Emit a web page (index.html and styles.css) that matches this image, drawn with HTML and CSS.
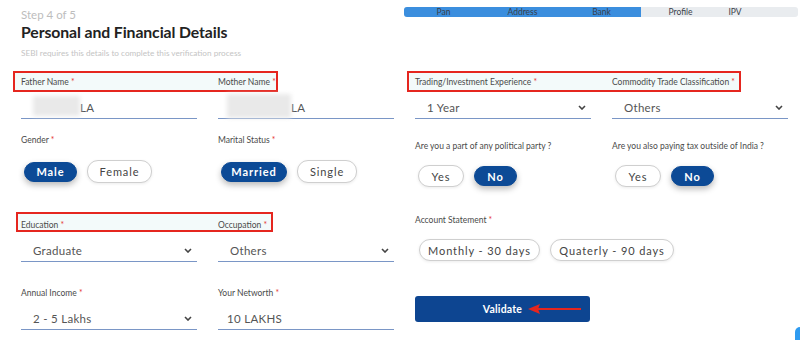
FILE: index.html
```html
<!DOCTYPE html>
<html>
<head>
<meta charset="utf-8">
<link rel="stylesheet" href="styles.css">
</head>
<body>
<div class="page">
  <div class="col left">
    <div class="head">
      <div class="step">Step 4 of 5</div>
      <h1 class="title">Personal and Financial Details</h1>
      <div class="sub">SEBI requires this details to complete this verification process</div>
    </div>

    <div class="labels r1">
      <div class="annot a1"></div>
      <label class="lbl">Father Name <span class="req">*</span></label>
      <label class="lbl">Mother Name <span class="req">*</span></label>
    </div>
    <div class="fields">
      <div class="field text"><span class="blur b1"></span>LA</div>
      <div class="field text"><span class="blur b2"></span>LA</div>
    </div>

    <div class="labels r2">
      <label class="lbl">Gender <span class="req">*</span></label>
      <label class="lbl">Marital Status <span class="req">*</span></label>
    </div>
    <div class="pillrow">
      <div class="pills">
        <span class="pill on p-male">Male</span>
        <span class="pill p-female">Female</span>
      </div>
      <div class="pills">
        <span class="pill on p-married">Married</span>
        <span class="pill p-single">Single</span>
      </div>
    </div>

    <div class="labels r3">
      <div class="annot a3"></div>
      <label class="lbl">Education <span class="req">*</span></label>
      <label class="lbl">Occupation <span class="req">*</span></label>
    </div>
    <div class="fields">
      <div class="field select">Graduate<svg class="chev" viewBox="0 0 8 5"><path d="M1 1l3 3 3-3"/></svg></div>
      <div class="field select">Others<svg class="chev" viewBox="0 0 8 5"><path d="M1 1l3 3 3-3"/></svg></div>
    </div>

    <div class="labels r4">
      <label class="lbl">Annual Income <span class="req">*</span></label>
      <label class="lbl">Your Networth <span class="req">*</span></label>
    </div>
    <div class="fields">
      <div class="field select">2 - 5 Lakhs<svg class="chev" viewBox="0 0 8 5"><path d="M1 1l3 3 3-3"/></svg></div>
      <div class="field text nw">10 LAKHS</div>
    </div>
  </div>

  <div class="col right">
    <div class="progress">
      <div class="fill"></div>
      <div class="steps">
        <span>Pan</span><span>Address</span><span>Bank</span><span>Profile</span><span>IPV</span>
      </div>
    </div>

    <div class="labels rr1">
      <div class="annot a2"></div>
      <label class="lbl">Trading/Investment Experience <span class="req">*</span></label>
      <label class="lbl">Commodity Trade Classification <span class="req">*</span></label>
    </div>
    <div class="fields">
      <div class="field select">1 Year<svg class="chev" viewBox="0 0 8 5"><path d="M1 1l3 3 3-3"/></svg></div>
      <div class="field select">Others<svg class="chev" viewBox="0 0 8 5"><path d="M1 1l3 3 3-3"/></svg></div>
    </div>

    <div class="labels rr2">
      <label class="lbl">Are you a part of any political party ?</label>
      <label class="lbl">Are you also paying tax outside of India ?</label>
    </div>
    <div class="pillrow rp2">
      <div class="pills">
        <span class="pill p-yes">Yes</span>
        <span class="pill on p-no">No</span>
      </div>
      <div class="pills">
        <span class="pill p-yes">Yes</span>
        <span class="pill on p-no">No</span>
      </div>
    </div>

    <div class="labels rr3">
      <label class="lbl">Account Statement <span class="req">*</span></label>
    </div>
    <div class="pills rp3">
      <span class="pill p-month">Monthly - 30 days</span>
      <span class="pill p-quart">Quaterly - 90 days</span>
    </div>

    <div class="btnwrap">
      <button class="validate">Validate</button>
      <svg class="arrow" viewBox="0 0 55 12"><path d="M10 6H53" /><polygon points="0,6 12,1 10,6 12,11"/></svg>
    </div>
  </div>
</div>
<div class="chat"></div>
</body>
</html>
```

FILE: styles.css
```css
* { box-sizing: border-box; }
html, body { margin: 0; padding: 0; background: #fff; }
html { overflow: hidden; }
body {
  font-family: "Lato", "Open Sans", sans-serif;
  color: #444;
  width: 800px;
  height: 340px;
  overflow: hidden;
  position: relative;
}
.page {
  display: flex;
  gap: 22px;
  padding-left: 21px;
}
.col { width: 372px; display: flex; flex-direction: column; }

.head { display: flex; flex-direction: column; }
.step { margin-top: 8px; font-size: 11.5px; line-height: 14px; color: #bdbdbd; }
.title { margin: 0; margin-top: -1px; font-size: 15.8px; line-height: 22px; font-weight: 700; color: #222; letter-spacing: -0.1px; }
.sub { margin-top: 5px; font-size: 8.2px; line-height: 10px; color: #c4c4c4; }

.labels {
  position: relative;
  display: grid;
  grid-template-columns: 176px 176px;
  column-gap: 21px;
  height: 12px;
}
.lbl {
  position: relative;
  z-index: 1;
  font-size: 8.5px;
  line-height: 11px;
  padding-top: 2px;
  color: #4a4a4a;
  white-space: nowrap;
}
.req { color: #e53935; }

.annot {
  position: absolute;
  border: 2px solid #e5261f;
  background: #f3fafa;
  z-index: 0;
}
.a1 { left: -8px; top: -4px; width: 265px; height: 21px; }
.a3 { left: -5px; top: -6px; width: 257px; height: 20px; }
.a2 { left: -8px; top: -4px; width: 334px; height: 21px; }

.r1 { margin-top: 17px; }
.r2 { margin-top: 14px; }
.r3 { margin-top: 35px; }
.r4 { margin-top: 24px; }

.fields {
  display: grid;
  grid-template-columns: 176px 176px;
  column-gap: 21px;
  margin-top: 9px;
}
.field {
  height: 23px;
  border-bottom: 1.5px solid #7a96c6;
  font-size: 11.5px;
  line-height: 19px;
  color: #555;
  padding-left: 12px;
  display: flex;
  align-items: center;
  position: relative;
  letter-spacing: 0.3px;
}
.field.nw { padding-left: 9px; }
.select { justify-content: space-between; padding-right: 5px; }
.chev { width: 8px; height: 5px; fill: none; stroke: #444; stroke-width: 1.6; }

.blur {
  display: inline-block;
  height: 20px;
  background: #e9e9e9;
  filter: blur(2px);
  margin-bottom: 2px;
}
.b1 { width: 47px; }
.b2 { width: 64px; height: 24px; margin-left: -3px; }

.pillrow {
  display: grid;
  grid-template-columns: 176px 176px;
  column-gap: 21px;
  margin-top: 15px;
}
.pills { display: flex; align-items: center; gap: 10px; padding-left: 3px; }
.pill {
  height: 22px;
  border-radius: 11px;
  border: 1px solid #cfcfcf;
  background: #fff;
  color: #444;
  font-size: 11px;
  letter-spacing: 0.9px;
  display: inline-flex;
  align-items: center;
  justify-content: center;
  font-weight: 400;
  box-shadow: 0 1px 3px rgba(0,0,0,0.08);
}
.pill.on {
  background: #0c4a96;
  border-color: #0c4a96;
  color: #fff;
  font-weight: 700;
  box-shadow: 0 3px 6px rgba(0,0,0,0.28);
  height: 20px;
}
.p-male { width: 53px; }
.p-female { width: 65px; height: 23px; }
.p-married { width: 66px; }
.p-single { width: 60px; height: 23px; }
.p-yes { width: 46px; }
.p-no { width: 43px; }
.p-month { width: 121px; }
.p-quart { width: 124px; }

.progress {
  position: relative;
  margin: 7px -11px 0;
  height: 10px;
  border-radius: 3px;
  background: #e9ecef;
  overflow: hidden;
}
.fill { position: absolute; left: 0; top: 0; bottom: 0; width: 237px; background: #3b8ede; }
.steps {
  position: relative;
  display: grid;
  grid-template-columns: 79px 79px 79px 79px 30px;
  font-size: 8.5px;
  line-height: 10px;
  color: #3a3f4a;
}
.steps span { text-align: center; }

.rr1 { margin-top: 58px; }
.rr2 { margin-top: 20px; }
.rp2 { margin-top: 14px; }
.rr3 { margin-top: 26px; }
.rp3 { margin-top: 14px; padding-left: 4px; }

.btnwrap { position: relative; margin-top: 35px; }
.validate {
  display: block;
  width: 175px;
  height: 26px;
  border: none;
  border-radius: 3px;
  background: #0d4591;
  color: #fff;
  font-family: "Lato", sans-serif;
  font-weight: 700;
  font-size: 10.5px;
  letter-spacing: 0.2px;
  padding: 0;
}
.arrow {
  position: absolute;
  left: 113px;
  top: 7px;
  width: 55px;
  height: 12px;
}
.arrow path { stroke: #e5261f; stroke-width: 2; fill: none; }
.arrow polygon { fill: #e5261f; }

.chat {
  position: absolute;
  left: 795px;
  top: 327px;
  width: 5px;
  height: 13px;
  border-top-left-radius: 6px;
  background: #2f9bf0;
}
```
